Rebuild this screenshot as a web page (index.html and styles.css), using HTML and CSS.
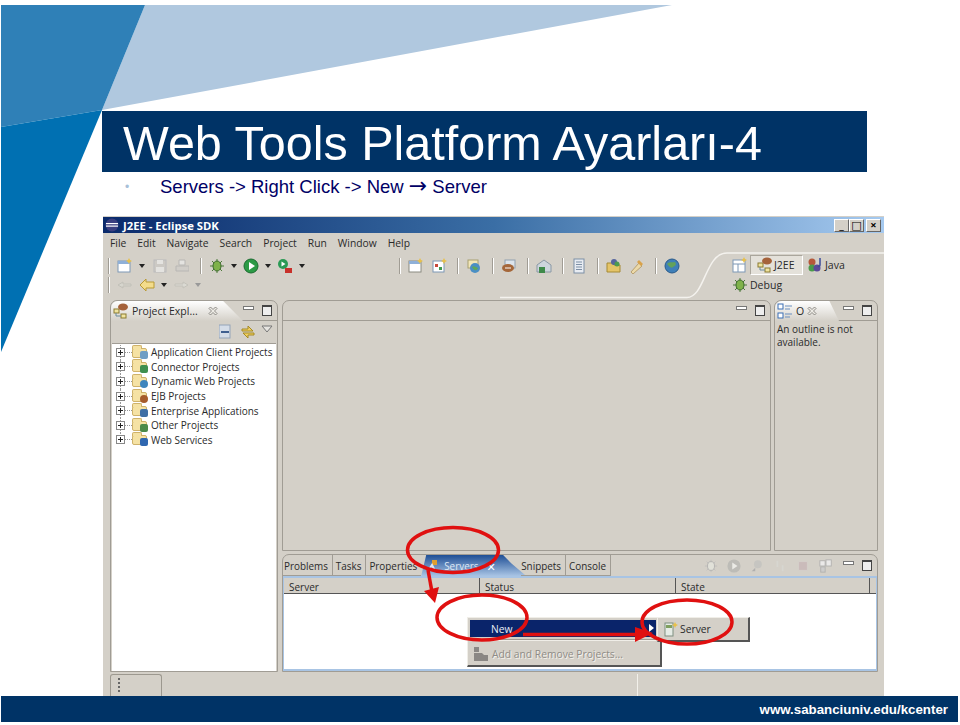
FILE: index.html
```html
<!DOCTYPE html>
<html>

<head>
  <title>Web Tools Platform Ayarları-4</title>
  <link rel="stylesheet" href="styles.css">
</head>

<body>
  <div class="slide">
    <!-- slide background wedges -->
    <svg class="wedges" width="960" height="725" viewBox="0 0 960 725">
      <polygon points="145,5 672,5 102,110" fill="#b0c8df" />
      <polygon points="1,5 145,5 102,110 1,127" fill="#2f80b7" />
      <polygon points="1,127 102,110 1,352" fill="#0070b2" />
    </svg>

    <h1 class="title">Web Tools Platform Ayarları-4</h1>
    <div class="bullet-row">
      <span class="bullet">•</span>
      <span class="bullet-text">Servers -&gt; Right Click -&gt; New <span class="bullet-arrow">→</span> Server</span>
    </div>

    <div class="eclipse">
      <div class="titlebar">
        <svg class="app-icon" width="14" height="14" viewBox="0 0 14 14">
          <circle cx="7" cy="7" r="6.5" fill="#3b3f80" />
          <rect x="1" y="5" width="12" height="1.2" fill="#fff" />
          <rect x="1" y="7.5" width="12" height="1.2" fill="#fff" />
        </svg>
        <span class="titlebar-text">J2EE - Eclipse SDK</span>
        <div class="win-btns">
          <span class="win-btn">_</span>
          <span class="win-btn">□</span>
          <span class="win-btn win-close">×</span>
        </div>
      </div>

      <div class="menubar">
        <span>File</span><span>Edit</span><span>Navigate</span><span>Search</span><span>Project</span><span>Run</span><span>Window</span><span>Help</span>
      </div>

      <div class="toolbars">
        <div class="tool-rows">
          <div class="tool-row">
            <i class="sep"></i>
            <svg class="ic" viewBox="0 0 16 16"><rect x="1" y="3" width="12" height="11" fill="#fff" stroke="#7d97b5" /><rect x="1" y="3" width="12" height="3" fill="#8fb0d8" /><path d="M12 0l1 2 2 1-2 1-1 2-1-2-2-1 2-1z" fill="#e8c04a" /></svg>
            <i class="drop"></i>
            <svg class="ic dim" viewBox="0 0 16 16"><rect x="3" y="2" width="12" height="12" fill="#c9c6c2" stroke="#aeb0b8" /><rect x="6" y="2" width="6" height="4" fill="#eee" /><rect x="5" y="9" width="8" height="5" fill="#eee" /></svg>
            <svg class="ic dim" viewBox="0 0 16 16"><path d="M6 2h6v5H6z" fill="#eee" stroke="#aaa" /><path d="M3 8h13v5H3z" fill="#cfccc8" stroke="#aaa" /></svg>
            <i class="sep sep-wide"></i>
            <svg class="ic" viewBox="0 0 16 16"><path d="M8 1v14M1 8h14M3 3l10 10M13 3L3 13" stroke="#4d7a3a" /><ellipse cx="8" cy="8" rx="4" ry="5" fill="#7fb24a" stroke="#3c6b2c" /></svg>
            <i class="drop"></i>
            <svg class="ic" viewBox="0 0 16 16"><circle cx="8" cy="8" r="7" fill="#2b9a45" stroke="#1b6b30" /><path d="M6 4l6 4-6 4z" fill="#fff" /></svg>
            <i class="drop"></i>
            <svg class="ic" viewBox="0 0 16 16"><circle cx="6" cy="6" r="5" fill="#2b9a55" /><path d="M4.500 3.500l4 2.500-4 2.500z" fill="#fff" /><rect x="8" y="10" width="7" height="5" fill="#c8302a" /></svg>
            <i class="drop"></i>
          </div>
          <div class="tool-row tool-row-small">
            <i class="sep"></i>
            <svg class="ic dim" viewBox="0 0 16 16"><path d="M1 8l5-3v2h8v2H6v2z" fill="#d8d8d0" stroke="#b8b8b0" /></svg>
            <svg class="ic" viewBox="0 0 16 16"><path d="M1 8l6-6v3h8v6H7v3z" fill="#f3dc8c" stroke="#b99a35" /></svg>
            <i class="drop"></i>
            <svg class="ic dim" viewBox="0 0 16 16"><path d="M15 8l-5-3v2H2v2h8v2z" fill="#e0e0da" stroke="#bcbcb4" /></svg>
            <i class="drop drop-dim"></i>
          </div>
        </div>

        <div class="tool-row tool-row-right">
          <i class="sep"></i>
          <svg class="ic" viewBox="0 0 16 16"><rect x="1" y="3" width="12" height="11" fill="#fff" stroke="#8a8a80" /><rect x="1" y="3" width="12" height="3" fill="#8fb0d8" /><path d="M12 0l1 2 2 1-2 1-1 2-1-2-2-1 2-1z" fill="#e8c04a" /></svg>
          <svg class="ic" viewBox="0 0 16 16"><rect x="2" y="3" width="11" height="11" fill="#fff" stroke="#7d97b5" /><rect x="4" y="6" width="3" height="3" fill="#c8493a" /><rect x="8" y="9" width="3" height="3" fill="#3f9a4d" /><path d="M13 0l1 2 2 1-2 1-1 2-1-2-2-1 2-1z" fill="#e8c04a" /></svg>
          <i class="sep"></i>
          <svg class="ic" viewBox="0 0 16 16"><rect x="2" y="2" width="10" height="8" fill="#f2e6b8" stroke="#a8a070" /><circle cx="9" cy="10" r="5" fill="#4b8fc4" /><path d="M6 9c2-2 4 0 6 1-1 3-4 3-6-1z" fill="#5fa85a" /></svg>
          <i class="sep"></i>
          <svg class="ic" viewBox="0 0 16 16"><rect x="4" y="2" width="10" height="8" fill="#dce4ec" stroke="#90a0b0" /><ellipse cx="7" cy="10" rx="6" ry="4" fill="#a5673a" /><path d="M4 10h6" stroke="#fff" /></svg>
          <i class="sep"></i>
          <svg class="ic" viewBox="0 0 16 16"><path d="M1 7l7-5 7 5v7H1z" fill="#cdd5dc" stroke="#8a98a5" /><rect x="3" y="9" width="6" height="6" fill="#3f8a4a" /></svg>
          <i class="sep"></i>
          <svg class="ic" viewBox="0 0 16 16"><rect x="3" y="1" width="10" height="14" fill="#e8ecf2" stroke="#7d8fa5" /><path d="M5 4h6M5 6.500h6M5 9h6M5 11.500h6" stroke="#7d8fa5" /></svg>
          <i class="sep"></i>
          <svg class="ic" viewBox="0 0 16 16"><path d="M1 5h5l2 2h6v7H1z" fill="#e5c468" stroke="#a58a35" /><circle cx="8" cy="4" r="3" fill="#56659e" /><circle cx="11" cy="6" r="2.500" fill="#4e9a4e" /></svg>
          <svg class="ic" viewBox="0 0 16 16"><path d="M2 14l8-9 3 3-9 8z" fill="#ecd9a8" stroke="#b8a070" /><path d="M10 2l4 4-2 2-4-4z" fill="#d9a24a" /></svg>
          <i class="sep"></i>
          <svg class="ic" viewBox="0 0 16 16"><circle cx="8" cy="8" r="7" fill="#3e7fb8" stroke="#2a5a8a" /><path d="M3 6c3-3 5-1 8-2 2 3 0 4-2 5-2 2-4-1-6-3z" fill="#63a25a" /></svg>
        </div>

        <div class="perspectives">
          <svg class="persp-curve" width="384" height="48" viewBox="0 0 384 48"><path d="M0 45.500H187C205 45.500 205 1 227 1H384" fill="none" stroke="#f4f2ee" stroke-width="1.500" /></svg>
          <div class="persp-row">
            <svg class="ic" viewBox="0 0 16 16"><rect x="1" y="3" width="12" height="12" fill="#fff" stroke="#7d97b5" /><path d="M1 7h12M6 7v8" stroke="#7d97b5" /><path d="M12 0l1 2 2 1-2 1-1 2-1-2-2-1 2-1z" fill="#e8c04a" /></svg>
            <span class="persp-btn active">
              <svg class="ic" viewBox="0 0 16 16"><rect x="1" y="6" width="5" height="4" fill="#f0e4a0" stroke="#8a7a30" /><rect x="8" y="11" width="5" height="4" fill="#f0e4a0" stroke="#8a7a30" /><path d="M3 10v3h5" stroke="#6a8a9a" fill="none" /><ellipse cx="10" cy="4" rx="5" ry="3.500" fill="#a5623a" /></svg>
              J2EE
            </span>
            <span class="persp-btn">
              <svg class="ic" viewBox="0 0 16 16"><circle cx="5" cy="5" r="3.500" fill="#b5583a" /><circle cx="5" cy="11" r="3.500" fill="#4a9a4a" /><circle cx="10" cy="11" r="3.500" fill="#5a4a98" /><path d="M13 1v7c0 1-1 2-2 1" stroke="#3a4a98" stroke-width="1.500" fill="none" /></svg>
              Java
            </span>
          </div>
          <div class="persp-row persp-row-second">
            <span class="persp-btn">
              <svg class="ic" viewBox="0 0 16 16"><path d="M8 1v14M1 8h14M3 3l10 10M13 3L3 13" stroke="#4d7a3a" /><ellipse cx="8" cy="8" rx="4" ry="5" fill="#7fb24a" stroke="#3c6b2c" /></svg>
              Debug
            </span>
          </div>
        </div>
      </div>

      <div class="workbench">
        <section class="view explorer">
          <div class="view-head">
            <div class="tab tab-light">
              <svg class="ic" viewBox="0 0 16 16"><rect x="1" y="6" width="5" height="4" fill="#f0e4a0" stroke="#8a7a30" /><rect x="8" y="11" width="5" height="4" fill="#f0e4a0" stroke="#8a7a30" /><path d="M3 10v3h5" stroke="#6a8a9a" fill="none" /><ellipse cx="10" cy="4" rx="5" ry="3.500" fill="#a5623a" /></svg>
              <span>Project Expl...</span>
              <svg class="tab-close" width="10" height="10" viewBox="0 0 10 10"><path d="M1 2.500L2.500 1 5 3.500 7.500 1 9 2.500 6.500 5 9 7.500 7.500 9 5 6.500 2.500 9 1 7.500 3.500 5z" fill="#eeece6" stroke="#77756f" stroke-width="0.800" /></svg>
            </div>
            <div class="view-ctrls"><i class="min"></i><i class="max"></i></div>
          </div>
          <div class="explorer-tools">
            <svg class="ic" viewBox="0 0 16 16"><rect x="0" y="1" width="11" height="13" fill="#d5dde8" stroke="#93a3b8" /><rect x="2" y="7" width="8" height="2" fill="#3f5f8f" /></svg>
            <svg class="ic" viewBox="0 0 16 16"><path d="M2 5h6V2l5 5H2zM14 11H8v3L3 9h11z" fill="#f0d060" stroke="#a58a25" /></svg>
            <svg class="view-menu" width="12" height="8" viewBox="0 0 12 8"><path d="M1 1h10L6 7z" fill="#e6e4e0" stroke="#777" /></svg>
          </div>
          <ul class="tree">
            <li><i class="plus"></i><i class="folder"><b class="badge b-app"></b></i>Application Client Projects</li>
            <li><i class="plus"></i><i class="folder"><b class="badge b-con"></b></i>Connector Projects</li>
            <li><i class="plus"></i><i class="folder"><b class="badge b-web"></b></i>Dynamic Web Projects</li>
            <li><i class="plus"></i><i class="folder"><b class="badge b-ejb"></b></i>EJB Projects</li>
            <li><i class="plus"></i><i class="folder"><b class="badge b-ent"></b></i>Enterprise Applications</li>
            <li><i class="plus"></i><i class="folder"><b class="badge b-oth"></b></i>Other Projects</li>
            <li><i class="plus"></i><i class="folder"><b class="badge b-ws"></b></i>Web Services</li>
          </ul>
        </section>

        <div class="main-col">
          <div class="upper">
            <section class="view editor">
              <div class="view-head">
                <div class="view-ctrls"><i class="min"></i><i class="max"></i></div>
              </div>
              <div class="editor-body"></div>
            </section>
            <section class="view outline">
              <div class="view-head">
                <div class="tab tab-light tab-outline">
                  <svg class="ic" viewBox="0 0 16 16"><rect x="1" y="1" width="5" height="5" fill="#fff" stroke="#3b6fb5" /><rect x="1" y="10" width="5" height="5" fill="#fff" stroke="#3b6fb5" /><path d="M8 3h7M8 6h5M8 11h7M8 14h5" stroke="#6b8fbf" /></svg>
                  <span>O</span>
                  <svg class="tab-close" width="10" height="10" viewBox="0 0 10 10"><path d="M1 2.500L2.500 1 5 3.500 7.500 1 9 2.500 6.500 5 9 7.500 7.500 9 5 6.500 2.500 9 1 7.500 3.500 5z" fill="#eeece6" stroke="#77756f" stroke-width="0.800" /></svg>
                </div>
                <div class="view-ctrls"><i class="min"></i><i class="max"></i></div>
              </div>
              <div class="outline-body">An outline is not available.</div>
            </section>
          </div>

          <section class="view bottom">
            <div class="view-head bottom-head">
              <span class="flat-tab flat-tab-first">Problems</span>
              <span class="flat-tab">Tasks</span>
              <span class="flat-tab flat-tab-props">Properties</span>
              <span class="servers-tab">
                <svg class="ic" viewBox="0 0 16 16"><rect x="6" y="2" width="5" height="5" fill="#e0a030" /><path d="M2 13l4-6 3 6" stroke="#dfe7f2" stroke-width="2" fill="none" /></svg>
                <span class="servers-label">Servers</span>
                <span class="servers-close">✕</span>
              </span>
              <span class="flat-tab flat-tab-after">Snippets</span>
              <span class="flat-tab">Console</span>
              <div class="bottom-tools">
                <svg class="ic" viewBox="0 0 16 16"><path d="M8 1v14M1 8h14M3 3l10 10M13 3L3 13" stroke="#bbb" /><ellipse cx="8" cy="8" rx="4" ry="5" fill="#e4e4dc" stroke="#aaa" /></svg>
                <svg class="ic" viewBox="0 0 16 16"><circle cx="8" cy="8" r="7.500" fill="#b9b9b5" /><path d="M6 4l6 4-6 4z" fill="#f0f0ec" /></svg>
                <svg class="ic" viewBox="0 0 16 16"><circle cx="9" cy="6" r="4.500" fill="#c4c4c0" /><path d="M2 14l4-4v4z" fill="#aaa" /></svg>
                <svg class="ic" viewBox="0 0 16 16"><path d="M5 2v7M11 14V7" stroke="#d8d8d2" stroke-width="2" /></svg>
                <svg class="ic" viewBox="0 0 16 16"><rect x="3" y="3" width="10" height="10" fill="#c9b8b8" stroke="#d4d0cc" /></svg>
                <svg class="ic" viewBox="0 0 16 16"><rect x="1" y="2" width="6" height="6" fill="#eee" stroke="#aaa" /><rect x="8" y="1" width="6" height="7" fill="#eee" stroke="#aaa" /><rect x="2" y="9" width="5" height="6" fill="#ccc" stroke="#aaa" /></svg>
              </div>
              <div class="view-ctrls"><i class="min"></i><i class="max"></i></div>
            </div>
            <div class="table-wrap">
              <div class="table-head">
                <span class="col col-server">Server</span>
                <span class="col col-status">Status</span>
                <span class="col col-state">State</span>
              </div>
            </div>
          </section>
        </div>
      </div>

      <div class="statusbar">
        <div class="trim"><span class="grip"></span></div>
        <i class="status-sep"></i>
      </div>
    </div>

    <div class="footer">www.sabanciuniv.edu/kcenter</div>

    <!-- context menu sits over the servers table -->
    <div class="ctx-menu">
      <div class="ctx-item ctx-new">New<span class="ctx-arrow"></span></div>
      <i class="ctx-sep"></i>
      <div class="ctx-item ctx-dim">
        <svg class="ic" viewBox="0 0 16 16"><rect x="1" y="1" width="5" height="5" fill="#8a8784" /><path d="M1 7h8l2 2h4v6H1z" fill="#8a8784" /></svg>
        Add and Remove Projects...
      </div>
    </div>
    <div class="ctx-sub">
      <svg class="ic" viewBox="0 0 16 16"><rect x="2" y="2" width="8" height="13" fill="#e6ece6" stroke="#7f8f80" /><rect x="3" y="4" width="6" height="3" fill="#80a060" /><path d="M12 1l1 2 2 1-2 1-1 2-1-2-2-1 2-1z" fill="#e8c04a" /></svg>
      Server
    </div>

    <!-- red marks drawn on the slide -->
    <svg class="marks" width="960" height="725" viewBox="0 0 960 725">
      <ellipse cx="453" cy="550" rx="45.500" ry="22.500" />
      <ellipse cx="482" cy="617.500" rx="45" ry="22.500" />
      <ellipse cx="687" cy="622" rx="45" ry="22" />
      <path d="M428 570l4 22" />
      <polygon points="424,591 439,587 435,603" class="head" />
      <path d="M523 634.500h112" />
      <polygon points="635,627 653,633 635,642" class="head" />
    </svg>
  </div>
</body>

</html>
```

FILE: styles.css
```css
html,
body {
  margin: 0;
  padding: 0;
  background-color: white;
}

.slide {
  position: relative;
  width: 960px;
  height: 725px;
  overflow: hidden;
  padding-top: 111px;
  box-sizing: border-box;
  font-family: "Liberation Sans", Arial, sans-serif;
}

.wedges,
.marks {
  position: absolute;
  top: 0;
  left: 0;
}

.wedges {
  z-index: 0;
}

.marks {
  z-index: 5;
}

.marks ellipse,
.marks path {
  fill: none;
  stroke: #e01010;
  stroke-width: 3.5;
}

.marks .head {
  fill: #e01010;
}

.title {
  position: relative;
  margin: 0 0 0 102px;
  width: 765px;
  height: 61px;
  padding-left: 21px;
  box-sizing: border-box;
  background-color: #003366;
  color: white;
  font-size: 48.5px;
  font-weight: normal;
  line-height: 65px;
  white-space: nowrap;
}

.bullet-row {
  position: relative;
  display: flex;
  align-items: center;
  height: 30px;
  padding-left: 125px;
  color: #000066;
  font-size: 18.5px;
}

.bullet {
  width: 35px;
  color: #a8c0d8;
  font-size: 12px;
}

.bullet-arrow {
  font-family: "DejaVu Sans", sans-serif;
  font-size: 22px;
  line-height: 20px;
}

/* eclipse window */
.eclipse {
  position: relative;
  display: flex;
  flex-direction: column;
  margin: 14px 0 0 103px;
  width: 781px;
  height: 480px;
  background-color: #d4d0c8;
  color: #2a2a2a;
  font-family: "Open Sans", "DejaVu Sans", sans-serif;
  font-size: 10px;
}

.titlebar {
  display: flex;
  align-items: center;
  height: 16px;
  margin-top: 1px;
  padding: 0 3px 0 2px;
  background: linear-gradient(to right, #0a2a6b, #3a6ea5 50%, #a6caf0);
  color: white;
}

.app-icon {
  margin-right: 4px;
}

.titlebar-text {
  font-weight: bold;
  font-size: 11.3px;
}

.win-btns {
  display: flex;
  margin-left: auto;
}

.win-btns .win-btn {
  width: 15px;
  height: 13px;
  background-color: #d4d0c8;
  border: 1px solid #666;
  border-left-color: #fff;
  border-top-color: #fff;
  box-sizing: border-box;
  color: #000;
  font-size: 11px;
  font-weight: bold;
  line-height: 10px;
  text-align: center;
}

.win-btns .win-close {
  margin-left: 2px;
}

.menubar {
  display: flex;
  gap: 11px;
  align-items: center;
  height: 19px;
  padding-left: 7px;
  font-size: 10.3px;
}

.toolbars {
  display: flex;
  position: relative;
  height: 48px;
  padding-left: 4px;
}

.tool-rows {
  width: 289px;
  padding-top: 2px;
}

.tool-row {
  display: flex;
  align-items: center;
  gap: 6px;
  height: 24px;
}

.tool-row-small {
  height: 14px;
}

.tool-row-right {
  align-self: flex-start;
  gap: 7px;
  margin-top: 2px;
}

.ic {
  width: 16px;
  height: 16px;
  flex: none;
}

.dim {
  opacity: 0.65;
}

.sep {
  width: 1px;
  height: 16px;
  margin: 0 1px;
  flex: none;
  background-color: #a09c94;
  border-right: 1px solid #fff;
}

.sep-wide {
  margin-left: 5px;
}

.tool-row-right .sep {
  margin: 0 0 0 3px;
}

.drop {
  width: 0;
  height: 0;
  flex: none;
  border: 3px solid transparent;
  border-top: 4px solid #222;
  border-bottom: 0;
}

.drop-dim {
  border-top-color: #999;
}

.perspectives {
  position: absolute;
  top: 0;
  right: 0;
  width: 160px;
  height: 48px;
  padding-left: 8px;
  box-sizing: border-box;
  font-size: 10.5px;
}

.persp-curve {
  position: absolute;
  top: 0;
  left: -224px;
}

.persp-row {
  position: relative;
  display: flex;
  align-items: center;
  gap: 2px;
  height: 22px;
  margin-top: 2px;
}

.persp-row-second {
  margin-top: -2px;
}

.persp-btn {
  display: flex;
  align-items: center;
  gap: 2px;
}

.persp-btn.active {
  width: 53px;
  height: 20px;
  box-sizing: border-box;
  margin-right: 2px;
  padding-left: 6px;
  gap: 1px;
  background-color: #e4e1da;
  border: 1px solid #aaa69c;
  border-right-color: #fff;
  border-bottom-color: #fff;
}

.workbench {
  display: flex;
  gap: 4px;
  padding: 0 6px 0 7px;
  height: 372px;
}

.view {
  display: flex;
  flex-direction: column;
  box-sizing: border-box;
  border: 1px solid #a09c94;
  border-radius: 7px 7px 0 0;
}

.view-head {
  display: flex;
  align-items: center;
  height: 19px;
  flex: none;
  border-bottom: 1px solid #a09c94;
}

.view-ctrls {
  display: flex;
  align-items: center;
  gap: 8px;
  margin-left: auto;
  padding-right: 5px;
}

.min {
  width: 9px;
  height: 2px;
  border: 1px solid #777;
  background-color: white;
  margin-top: -5px;
}

.max {
  width: 8px;
  height: 8px;
  border: 1px solid #444;
  border-top-width: 2px;
  background-color: #eee;
}

.tab {
  display: flex;
  align-items: center;
  gap: 3px;
  height: 20px;
  box-sizing: border-box;
  padding-left: 2px;
  font-size: 10.5px;
}

.tab-light {
  position: relative;
  width: 135px;
  margin-bottom: -1px;
  background: linear-gradient(to bottom, #fff, #d4d0c8);
  border-radius: 7px 0 0 0;
  clip-path: polygon(0 0, 85% 0, 100% 100%, 0 100%);
}

.tab-outline {
  width: 64px;
}

.tab-close {
  margin-left: 7px;
  flex: none;
}

.tab-outline .tab-close {
  margin-left: 0;
}

.explorer {
  width: 168px;
  flex: none;
}

.explorer-tools {
  display: flex;
  align-items: center;
  justify-content: flex-end;
  gap: 5px;
  height: 22px;
  padding-right: 4px;
}

.view-menu {
  margin-top: -6px;
}

.tree {
  flex: 1;
  margin: 0 1px 0;
  padding: 1px 0 0 4px;
  list-style: none;
  background-color: white;
  border-top: 1px solid #a09c94;
}

.tree li {
  position: relative;
  display: flex;
  align-items: center;
  height: 14.6px;
  white-space: nowrap;
}

/* dotted tree guides */
.tree li::before {
  content: "";
  position: absolute;
  left: 4px;
  top: 0;
  height: 100%;
  border-left: 1px dotted #999;
}

.tree li:last-child::before {
  height: 50%;
}

.plus {
  position: relative;
  width: 9px;
  height: 9px;
  flex: none;
  box-sizing: border-box;
  border: 1px solid #888;
  background:
    linear-gradient(#222, #222) center / 5px 1px no-repeat,
    linear-gradient(#222, #222) center / 1px 5px no-repeat,
    white;
}

.plus::after {
  content: "";
  position: absolute;
  left: 8px;
  top: 3px;
  width: 7px;
  border-top: 1px dotted #999;
}

.folder {
  position: relative;
  width: 15px;
  height: 10px;
  margin: 1px 4px 0 7px;
  flex: none;
  background-color: #f5e2a4;
  border: 1px solid #cfb26a;
  box-sizing: border-box;
  border-radius: 2px;
}

.folder::before {
  content: "";
  position: absolute;
  left: -1px;
  top: -4px;
  width: 8px;
  height: 3px;
  background-color: #f5e2a4;
  border: 1px solid #cfb26a;
  border-bottom: 0;
  border-radius: 2px 2px 0 0;
}

.badge {
  position: absolute;
  right: -2px;
  bottom: -2px;
  width: 8px;
  height: 8px;
  border-radius: 2px;
}

.b-app { background-color: #6f9ec4; }
.b-con { background-color: #3f8f4f; }
.b-web { background-color: #3e85bd; border-radius: 50%; }
.b-ejb { background-color: #a55c2c; border-radius: 50%; }
.b-ent { background-color: #3f6fa5; }
.b-oth { background-color: #4b8a4a; }
.b-ws { background-color: #2f67b0; }

.main-col {
  display: flex;
  flex-direction: column;
  flex: 1;
  gap: 3px;
  min-width: 0;
}

.upper {
  display: flex;
  gap: 3px;
  height: 251px;
}

.editor {
  flex: 1;
  border-radius: 7px 7px 0 0;
}

.editor-body {
  flex: 1;
}

.outline {
  width: 104px;
  flex: none;
}

.outline-body {
  flex: 1;
  padding: 2px 2px;
  line-height: 12.5px;
}

.bottom {
  flex: 1;
}

.bottom-head {
  height: 21px;
  border-bottom: 0;
}

.flat-tab {
  display: flex;
  align-items: center;
  height: 21px;
  padding: 2px 4px 0 3px;
  border-right: 1px solid #a09c94;
  border-bottom: 1px solid #a09c94;
  box-sizing: border-box;
  font-size: 9.9px;
}

.flat-tab-first {
  padding-left: 1px;
}

.flat-tab-props {
  border-right: 0;
}

.flat-tab-after {
  position: relative;
  margin-left: -5px;
  padding-left: 0;
  border-bottom: 1px solid #a09c94;
}

.servers-tab {
  display: flex;
  align-items: center;
  gap: 2px;
  width: 105px;
  height: 21px;
  padding: 1px 0 0 5px;
  box-sizing: border-box;
  background: linear-gradient(to bottom, #1f4f96, #a8c4e4);
  color: white;
  clip-path: polygon(0 100%, 5px 0, 78% 0, 86% 40%, 100% 100%);
  flex: none;
  font-size: 9.9px;
}

.servers-label {
  color: #dfe8f5;
}

.servers-close {
  margin-left: 6px;
  font-size: 11px;
  font-weight: bold;
}

.bottom-tools {
  display: flex;
  align-items: center;
  gap: 9px;
  margin-left: auto;
  padding-right: 10px;
  opacity: 0.85;
}

.bottom-tools .ic {
  width: 14px;
  height: 14px;
}

.bottom-head .view-ctrls {
  margin-left: 0;
}

.table-wrap {
  flex: 1;
  background-color: white;
  border: 2px solid #a8c4e4;
  border-left-width: 1px;
  border-right-width: 1px;
}

.table-head {
  display: flex;
  height: 15px;
  background-color: #d4d0c8;
  border-bottom: 1px solid #555;
}

.col {
  padding-left: 5px;
  box-sizing: border-box;
  border-right: 1px solid #555;
  line-height: 18px;
}

.col-server { width: 196px; }
.col-status { width: 196px; }
.col-state { width: 194px; }

.statusbar {
  display: flex;
  flex: 1;
  padding-left: 7px;
}

.trim {
  width: 52px;
  box-sizing: border-box;
  margin-top: 2px;
  border: 1px solid #9c988f;
  border-bottom: 0;
  border-radius: 3px 3px 0 0;
  padding: 3px 0 0 7px;
}

.grip {
  display: block;
  width: 2px;
  height: 14px;
  background: repeating-linear-gradient(to bottom, #666 0 2px, transparent 2px 4px);
}

.status-sep {
  display: block;
  width: 1px;
  height: 22px;
  margin: 2px 0 0 475px;
  background-color: #f2f0ea;
}

.footer {
  position: relative;
  display: flex;
  align-items: center;
  justify-content: flex-end;
  margin-left: 1px;
  width: 957px;
  height: 26px;
  padding-right: 10px;
  box-sizing: border-box;
  background-color: #003366;
  color: white;
  font-size: 13.3px;
  font-weight: bold;
}

/* popup menus */
.ctx-menu,
.ctx-sub {
  position: absolute;
  z-index: 4;
  box-sizing: border-box;
  background-color: #d4d0c8;
  border: 1px solid #f0eee8;
  border-right: 2px solid #555;
  border-bottom: 2px solid #555;
  font-family: "Open Sans", "DejaVu Sans", sans-serif;
  font-size: 10.3px;
  color: #2a2a2a;
}

.ctx-menu {
  top: 617px;
  left: 467px;
  width: 195px;
  height: 50px;
  padding: 2px 4px 2px 2px;
}

.ctx-sub {
  top: 617px;
  left: 657px;
  width: 93px;
  height: 25px;
  display: flex;
  align-items: center;
  gap: 1px;
  padding-left: 5px;
}

.ctx-item {
  display: flex;
  align-items: center;
  height: 17px;
}

.ctx-new {
  position: relative;
  padding-left: 21px;
  background-color: #0a246a;
  color: #e8ecf4;
}

.ctx-arrow {
  position: absolute;
  right: 2px;
  top: 4px;
  border: 4px solid transparent;
  border-left: 5px solid white;
  border-right: 0;
}

.ctx-sep {
  display: block;
  height: 1px;
  margin: 2px 0;
  background-color: #f0eee8;
  border-top: 1px solid #a09c94;
}

.ctx-dim {
  gap: 3px;
  padding-left: 3px;
  height: 22px;
  color: #8f8c86;
  text-shadow: 1px 1px 0 #f4f2ee;
}
```
